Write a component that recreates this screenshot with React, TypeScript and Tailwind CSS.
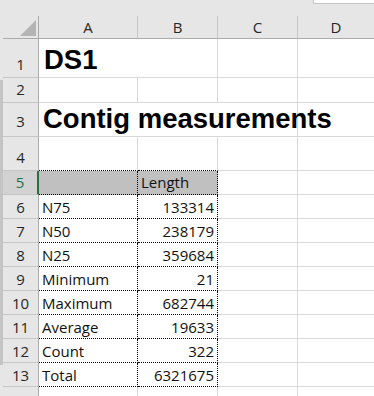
import React from "react";

const stats: [string, string][] = [
  ["N75", "133314"],
  ["N50", "238179"],
  ["N25", "359684"],
  ["Minimum", "21"],
  ["Maximum", "682744"],
  ["Average", "19633"],
  ["Count", "322"],
  ["Total", "6321675"],
];

const grid = "border-[#d9d9d9]";
const dotted = "border-r border-b border-dotted border-black";

function RowHead({ num, pb, active }: { num: string; pb: string; active?: boolean }) {
  return (
    <div
      className={`w-[36px] shrink-0 flex items-end justify-center leading-none text-[15px] border-b border-[#c6c6c6] ${pb} ${
        active
          ? "bg-[#d2d2d2] text-[#217346] border-r-2 border-r-[#217346]"
          : "bg-[#e6e6e6] text-[#262626] border-r border-r-[#ababab]"
      }`}
    >
      {num}
    </div>
  );
}

export default function App() {
  return (
    <div className="w-[374px] h-[396px] overflow-hidden bg-white flex flex-col font-['Open_Sans',sans-serif] text-[#111]">
      {/* window strip */}
      <div className="h-[16px] shrink-0 bg-[#e6e6e6] flex justify-end">
        <div className="w-[61px] h-[4px] bg-white border-l border-b border-[#c6c6c6]" />
      </div>

      <div className="flex flex-1 min-h-0">
        <div className="w-[3px] shrink-0 bg-[#e6e6e6] pt-[64px]">
          <div className="h-[285px] bg-[#c4c4c4]" />
        </div>

        <div className="flex-1 flex flex-col">
          {/* column headers */}
          <div className="h-[23px] shrink-0 flex bg-[#e6e6e6] text-[15px] leading-none text-[#262626]">
            <div className="w-[36px] shrink-0 border-r border-b border-[#ababab] flex items-end justify-end pr-[2px] pb-[2px]">
              <svg width="16" height="16" viewBox="0 0 16 16">
                <polygon points="16,0 16,16 0,16" fill="#b4b4b4" />
              </svg>
            </div>
            <div className="w-[99px] shrink-0 border-r border-r-[#c6c6c6] border-b border-b-[#ababab] flex items-end justify-center pb-[3px]">A</div>
            <div className="w-[80px] shrink-0 border-r border-r-[#c6c6c6] border-b border-b-[#ababab] flex items-end justify-center pb-[3px]">B</div>
            <div className="w-[80px] shrink-0 border-r border-r-[#c6c6c6] border-b border-b-[#ababab] flex items-end justify-center pb-[3px]">C</div>
            <div className="flex-1 border-b border-b-[#ababab] flex items-end justify-center pb-[3px]">D</div>
          </div>

          {/* row 1 */}
          <div className="h-[39px] shrink-0 flex">
            <RowHead num="1" pb="pb-[5px]" />
            <div className={`w-[99px] shrink-0 border-b ${grid} flex items-end pl-[5px] pb-[4px] leading-none whitespace-nowrap font-['Liberation_Sans',Arial,sans-serif] font-bold text-[27.5px] text-black`}>
              DS1
            </div>
            <div className={`w-[80px] shrink-0 border-r border-b ${grid}`} />
            <div className={`w-[80px] shrink-0 border-r border-b ${grid}`} />
            <div className={`flex-1 border-b ${grid}`} />
          </div>

          {/* row 2 */}
          <div className="h-[25px] shrink-0 flex">
            <RowHead num="2" pb="pb-[5px]" />
            <div className={`w-[99px] shrink-0 border-r border-b ${grid}`} />
            <div className={`w-[80px] shrink-0 border-r border-b ${grid}`} />
            <div className={`w-[80px] shrink-0 border-r border-b ${grid}`} />
            <div className={`flex-1 border-b ${grid}`} />
          </div>

          {/* row 3 */}
          <div className="h-[34px] shrink-0 flex">
            <RowHead num="3" pb="pb-[7px]" />
            <div className={`w-[99px] shrink-0 border-b ${grid} flex items-end pl-[4px] pb-[4px] leading-none whitespace-nowrap font-['Liberation_Sans',Arial,sans-serif] font-bold text-[27.5px] text-black relative z-10`}>
              Contig measurements
            </div>
            <div className={`w-[80px] shrink-0 border-b ${grid}`} />
            <div className={`w-[80px] shrink-0 border-r border-b ${grid}`} />
            <div className={`flex-1 border-b ${grid}`} />
          </div>

          {/* row 4 */}
          <div className="h-[34px] shrink-0 flex">
            <RowHead num="4" pb="pb-[5px]" />
            <div className={`w-[99px] shrink-0 border-r border-b ${grid} border-b-black [border-bottom-style:dotted]`} />
            <div className={`w-[80px] shrink-0 border-r border-b ${grid} border-b-black [border-bottom-style:dotted]`} />
            <div className={`w-[80px] shrink-0 border-r border-b ${grid}`} />
            <div className={`flex-1 border-b ${grid}`} />
          </div>

          {/* row 5 */}
          <div className="h-[24px] shrink-0 flex text-[15px] leading-none">
            <RowHead num="5" pb="pb-[4px]" active />
            <div className={`w-[99px] shrink-0 bg-[#c0c0c0] ${dotted}`} />
            <div className={`w-[80px] shrink-0 bg-[#c0c0c0] ${dotted} flex items-end pl-[3px] pb-[4px]`}>Length</div>
            <div className={`w-[80px] shrink-0 border-r border-b ${grid}`} />
            <div className={`flex-1 border-b ${grid}`} />
          </div>

          {stats.map(([label, value], i) => (
            <div key={label} className="h-[24px] shrink-0 flex text-[15px] leading-none">
              <RowHead num={String(i + 6)} pb="pb-[3px]" />
              <div className={`w-[99px] shrink-0 ${dotted} flex items-end pl-[3px] pb-[3px]`}>{label}</div>
              <div className={`w-[80px] shrink-0 ${dotted} flex items-end justify-end pr-[3px] pb-[3px]`}>{value}</div>
              <div className={`w-[80px] shrink-0 border-r border-b ${grid}`} />
              <div className={`flex-1 border-b ${grid}`} />
            </div>
          ))}

          {/* row 14 */}
          <div className="flex-1 flex">
            <div className="w-[36px] shrink-0 bg-[#e6e6e6] border-r border-r-[#ababab]" />
            <div className={`w-[99px] shrink-0 border-r ${grid}`} />
            <div className={`w-[80px] shrink-0 border-r ${grid}`} />
            <div className={`w-[80px] shrink-0 border-r ${grid}`} />
            <div className="flex-1" />
          </div>
        </div>
      </div>
    </div>
  );
}
